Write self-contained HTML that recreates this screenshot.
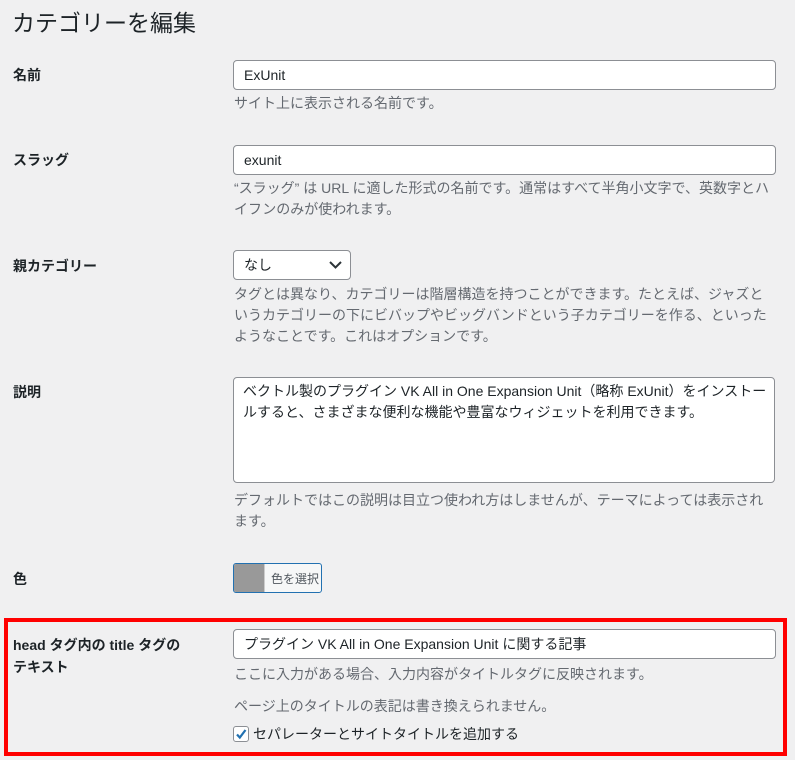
<!DOCTYPE html>
<html><head><meta charset="utf-8"><style>
body{margin:0;width:795px;height:760px;background:#f0f0f1;font-family:"Liberation Sans","Noto Sans CJK JP",sans-serif;color:#1d2327;position:relative;overflow:hidden;font-size:14px}
.a{position:absolute;white-space:nowrap}
.lbl{font-weight:bold;font-size:14px}
.d{color:#646970;font-size:14px;line-height:21px}
.in{position:absolute;left:233px;width:541px;height:28px;background:#fff;border:1px solid #8c8f94;border-radius:4px;font-size:14px;line-height:28px;padding-left:10px;box-sizing:content-box}
</style></head><body>
<div class="a" style="left:12px;top:4px;font-size:23px;font-weight:400">カテゴリーを編集</div>

<div class="a lbl" style="left:13px;top:65px">名前</div>
<div class="in" style="top:60px;width:531px">ExUnit</div>
<div class="a d" style="left:234px;top:93px">サイト上に表示される名前です。</div>

<div class="a lbl" style="left:13px;top:150px">スラッグ</div>
<div class="in" style="top:145px;width:531px">exunit</div>
<div class="a d" style="left:234px;top:178px">“スラッグ” は URL に適した形式の名前です。通常はすべて半角小文字で、英数字とハ<br>イフンのみが使われます。</div>

<div class="a lbl" style="left:13px;top:256px">親カテゴリー</div>
<div class="a" style="left:233px;top:250px;width:116px;height:28px;background:#fff;border:1px solid #8c8f94;border-radius:4px;line-height:28px;padding-left:0">
<span style="position:absolute;left:10px">なし</span>
<svg style="position:absolute;right:8px;top:10px" width="13" height="8" viewBox="0 0 13 8"><path d="M1 1l5.5 5.5L12 1" fill="none" stroke="#2c3338" stroke-width="2"/></svg></div>
<div class="a d" style="left:234px;top:284px">タグとは異なり、カテゴリーは階層構造を持つことができます。たとえば、ジャズと<br>いうカテゴリーの下にビバップやビッグバンドという子カテゴリーを作る、といった<br>ようなことです。これはオプションです。</div>

<div class="a lbl" style="left:13px;top:382px">説明</div>
<div class="a" style="left:233px;top:377px;background:#fff;border:1px solid #8c8f94;border-radius:4px;line-height:21px;padding:3px 0 0 9px;white-space:normal;box-sizing:border-box;width:542px;height:106px">ベクトル製のプラグイン VK All in One Expansion Unit（略称 ExUnit）をインストー<br>ルすると、さまざまな便利な機能や豊富なウィジェットを利用できます。</div>
<div class="a d" style="left:234px;top:490px">デフォルトではこの説明は目立つ使われ方はしませんが、テーマによっては表示され<br>ます。</div>

<div class="a lbl" style="left:13px;top:569px">色</div>
<div class="a" style="left:233px;top:563px;width:87px;height:28px;border:1px solid #2271b1;border-radius:3px;background:#f6f7f7;overflow:hidden">
<div style="position:absolute;left:0;top:0;width:30px;height:28px;background:#999;border-right:1px solid #ccc"></div>
<span style="position:absolute;left:37px;top:6px;font-size:12px;color:#50575e">色を選択</span></div>

<div class="a" style="left:4px;top:618px;width:775px;height:130px;border:4px solid #f00"></div>
<div class="a lbl" style="left:13px;top:634px;line-height:22px">head タグ内の title タグの<br>テキスト</div>
<div class="in" style="top:629px;width:531px">プラグイン VK All in One Expansion Unit に関する記事</div>
<div class="a d" style="left:234px;top:664px">ここに入力がある場合、入力内容がタイトルタグに反映されます。</div>
<div class="a d" style="left:234px;top:696px">ページ上のタイトルの表記は書き換えられません。</div>
<div class="a" style="left:233px;top:726px;width:14px;height:14px;background:#fff;border:1px solid #8c8f94;border-radius:3px">
<svg width="14" height="14" viewBox="0 0 14 14" style="position:absolute;left:0;top:0"><path d="M3 7.5l2.8 3L11.5 3" fill="none" stroke="#2271b1" stroke-width="2.2"/></svg></div>
<div class="a" style="left:253px;top:724px;color:#1d2327">セパレーターとサイトタイトルを追加する</div>
</body></html>
